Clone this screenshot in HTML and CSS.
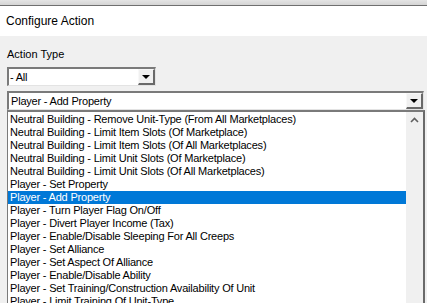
FILE: index.html
```html
<!DOCTYPE html>
<html>
<head>
<meta charset="utf-8">
<link rel="stylesheet" href="styles.css">
</head>
<body>
<div class="topstrip"></div>
<div class="titlebar">Configure Action</div>
<div class="content">
  <div class="label">Action Type</div>
  <div class="combo combo-small">
    <div class="combo-text">- All</div>
    <div class="combo-btn"><span class="tri"></span></div>
  </div>
  <div class="combo combo-wide">
    <div class="combo-text">Player - Add Property</div>
    <div class="combo-btn"><span class="tri"></span></div>
  </div>
  <div class="listbox">
    <div class="items">
      <div class="item">Neutral Building - Remove Unit-Type (From All Marketplaces)</div>
      <div class="item">Neutral Building - Limit Item Slots (Of Marketplace)</div>
      <div class="item">Neutral Building - Limit Item Slots (Of All Marketplaces)</div>
      <div class="item">Neutral Building - Limit Unit Slots (Of Marketplace)</div>
      <div class="item">Neutral Building - Limit Unit Slots (Of All Marketplaces)</div>
      <div class="item">Player - Set Property</div>
      <div class="item selected">Player - Add Property</div>
      <div class="item">Player - Turn Player Flag On/Off</div>
      <div class="item">Player - Divert Player Income (Tax)</div>
      <div class="item">Player - Enable/Disable Sleeping For All Creeps</div>
      <div class="item">Player - Set Alliance</div>
      <div class="item">Player - Set Aspect Of Alliance</div>
      <div class="item">Player - Enable/Disable Ability</div>
      <div class="item">Player - Set Training/Construction Availability Of Unit</div>
      <div class="item">Player - Limit Training Of Unit-Type</div>
    </div>
    <div class="scrollbar">
      <svg class="arrow" width="9" height="6" viewBox="0 0 9 6"><path d="M1 5 L4.5 1.5 L8 5" fill="none" stroke="#606060" stroke-width="1.6"/></svg>
    </div>
  </div>
</div>
</body>
</html>
```

FILE: styles.css
```css
html, body {
  margin: 0;
  padding: 0;
}
body {
  width: 427px;
  height: 303px;
  overflow: hidden;
  background: #f0f0f0;
  font-family: "Liberation Sans", Arial, sans-serif;
  color: #000;
}
.topstrip {
  height: 5px;
  background: linear-gradient(#e4e4e4, #d4d4d4);
  border-bottom: 1px solid #6f6f6f;
}
.titlebar {
  height: 30px;
  background: #fff;
  font-size: 12px;
  line-height: 30px;
  padding-left: 6px;
}
.content {
  padding: 11px 0 0 7px;
}
.label {
  font-size: 11px;
  line-height: 14px;
  height: 14px;
  margin-bottom: 6px;
}
.combo {
  box-sizing: border-box;
  display: flex;
  align-items: stretch;
  background: #fff;
  border-top: 2px solid #7a7a7a;
  border-left: 2px solid #7a7a7a;
  border-right: 1px solid #e3e3e3;
  border-bottom: 1px solid #e3e3e3;
  font-size: 11px;
  letter-spacing: -0.2px;
}
.combo-small {
  width: 149px;
  height: 19px;
  margin-bottom: 5px;
}
.combo-wide {
  width: 417px;
  height: 19px;
}
.combo-text {
  flex: 1;
  line-height: 16px;
  padding-left: 1px;
}
.combo-wide .combo-text {
  padding-left: 2px;
}
.combo-btn {
  box-sizing: border-box;
  width: 17px;
  background: #f0f0f0;
  border-top: 1px solid #f8f8f8;
  border-left: 1px solid #f8f8f8;
  border-right: 2px solid #696969;
  border-bottom: 2px solid #696969;
  display: flex;
  align-items: center;
  justify-content: center;
}
.tri {
  width: 0;
  height: 0;
  border-left: 4px solid transparent;
  border-right: 4px solid transparent;
  border-top: 4px solid #000;
  margin-top: 1px;
}
.listbox {
  box-sizing: border-box;
  width: 418px;
  height: 200px;
  display: flex;
  background: #fff;
  border-top: 2px solid #7a7a7a;
  border-left: 1px solid #7a7a7a;
  border-right: 2px solid #6a6a6a;
  font-size: 11px;
  letter-spacing: -0.2px;
}
.items {
  flex: 1;
  padding-top: 1px;
}
.item {
  height: 13px;
  line-height: 13px;
  padding-left: 2px;
  white-space: nowrap;
}
.item.selected {
  background: #0078d7;
  color: #fff;
}
.scrollbar {
  width: 17px;
  background: #f0f0f0;
  display: flex;
  justify-content: center;
  align-items: flex-start;
}
.arrow {
  margin-top: 5px;
}
```
